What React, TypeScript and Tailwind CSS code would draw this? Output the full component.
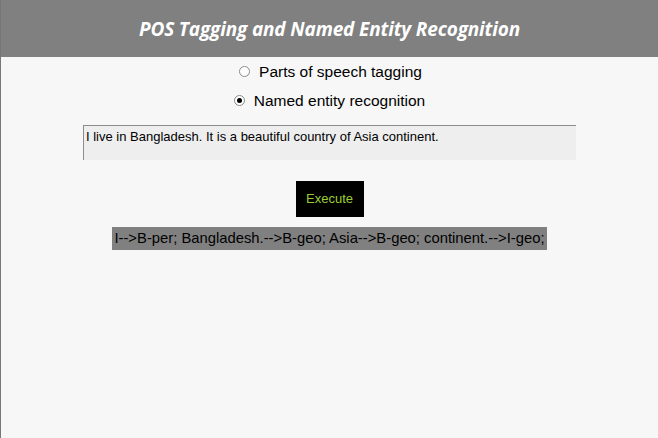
import React from "react";

const App: React.FC = () => {
  return (
    <div className="w-[658px] h-[438px] bg-[#f7f7f7] border-l border-[#777] font-['Liberation_Sans',Arial,sans-serif] overflow-hidden">
      {/* Header */}
      <header className="h-[57px] bg-[#808080] flex items-center justify-center">
        <h1 className="text-white text-[19px] font-bold italic font-['Open_Sans',sans-serif] tracking-[-0.15px] pt-[1px]">
          POS Tagging and Named Entity Recognition
        </h1>
      </header>

      <main className="flex flex-col items-center">
        {/* Options */}
        <div className="flex flex-col items-center mt-[5px] text-[15.5px] text-black">
          <label className="flex items-center h-[19px] ml-[2px]">
            <span className="w-[11px] h-[11px] rounded-full border border-[#8a8a8a] bg-white mr-[9px]" />
            Parts of speech tagging
          </label>
          <label className="flex items-center h-[19px] mt-[10px]">
            <span className="w-[11px] h-[11px] rounded-full border border-[#8a8a8a] bg-white mr-[9px] flex items-center justify-center">
              <span className="w-[5px] h-[5px] rounded-full bg-black" />
            </span>
            Named entity recognition
          </label>
        </div>

        {/* Input text */}
        <div className="mt-[15px] w-[493px] h-[35px] bg-[#eeeeee] border-t border-l border-[#8c8c8c] px-[2px] text-[13px] text-black leading-[15px] pt-[3px]">
          I live in Bangladesh. It is a beautiful country of Asia continent.
        </div>

        <button className="mt-[21px] w-[68px] h-[36px] bg-black text-[#9acd32] text-[13px]">
          Execute
        </button>

        {/* Result */}
        <div className="mt-[10px] w-[435px] h-[23px] bg-[#808080] text-black text-[14.8px] whitespace-nowrap flex items-center justify-center">
          I--&gt;B-per; Bangladesh.--&gt;B-geo; Asia--&gt;B-geo; continent.--&gt;I-geo;
        </div>
      </main>
    </div>
  );
};

export default App;
